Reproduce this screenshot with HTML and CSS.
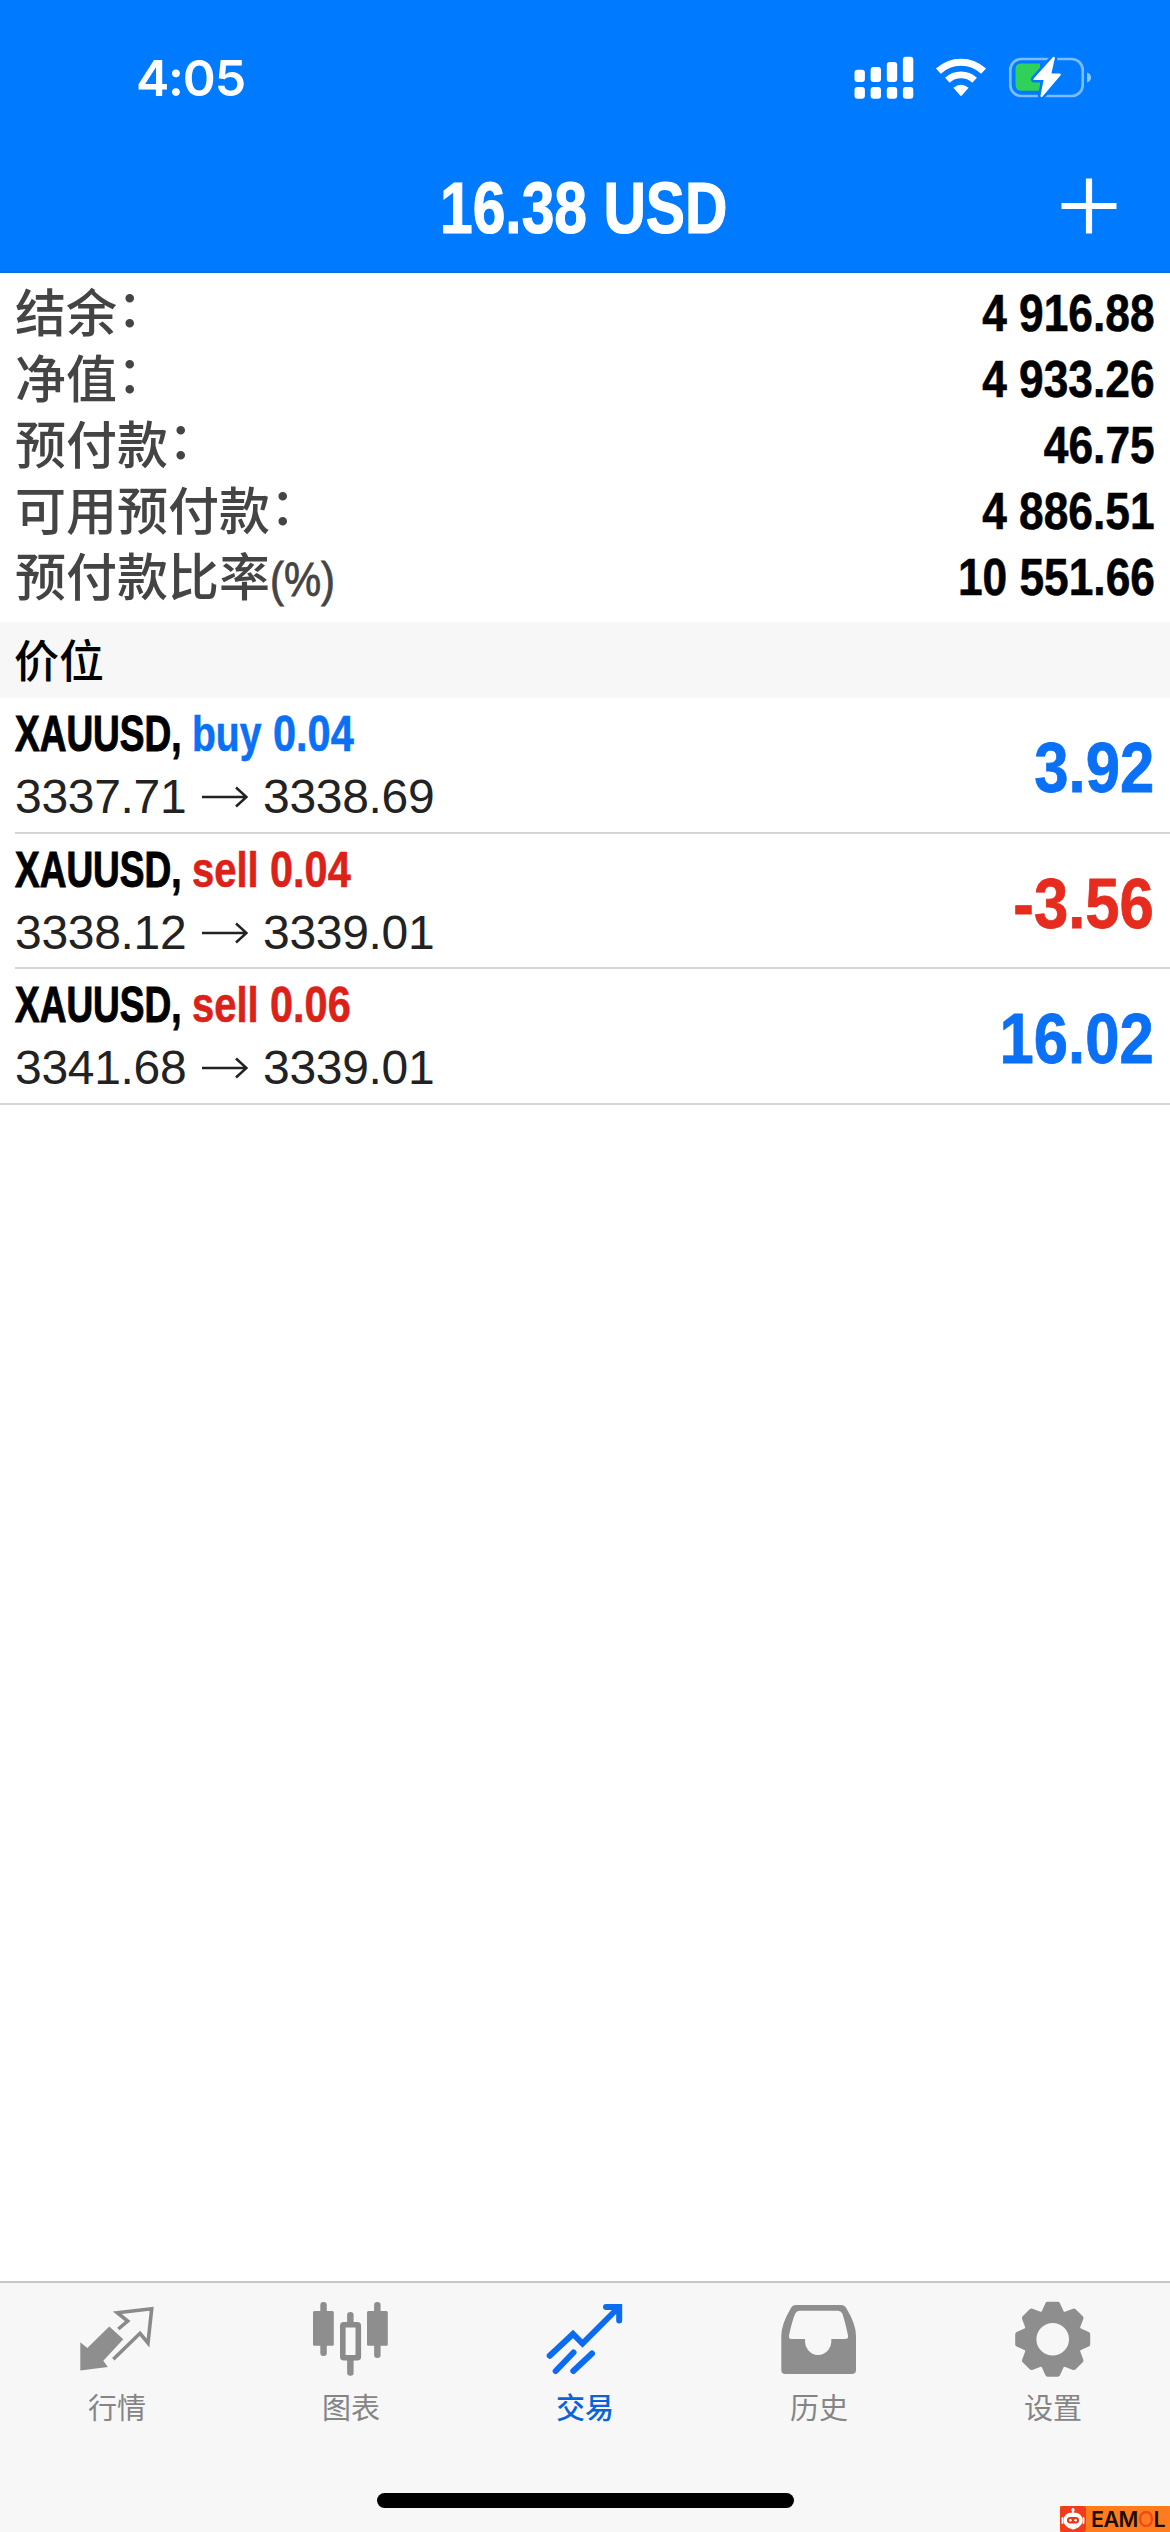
FILE: index.html
```html
<!DOCTYPE html>
<html lang="zh-CN">
<head>
<meta charset="utf-8">
<title>交易</title>
<link rel="stylesheet" href="styles.css">
</head>
<body>
<div class="app">
  <header class="header">
    <div class="status">
      <span class="clock">4:05</span>
      <div class="indicators">
        <svg width="60" height="48" viewBox="0 0 60 48" fill="#fff">
          <rect x="0.5" y="15.7" width="10.4" height="12.3" rx="3"/>
          <rect x="16.6" y="13" width="10.4" height="15" rx="3"/>
          <rect x="32.8" y="8" width="10.4" height="20" rx="3"/>
          <rect x="48.9" y="2.7" width="10.4" height="25.3" rx="3"/>
          <rect x="0.5" y="33" width="10.4" height="11.7" rx="3"/>
          <rect x="16.6" y="33" width="10.4" height="11.7" rx="3"/>
          <rect x="32.8" y="33" width="10.4" height="11.7" rx="3"/>
          <rect x="48.9" y="33" width="10.4" height="11.7" rx="3"/>
        </svg>
        <svg width="52" height="48" viewBox="0 0 52 48" fill="none" stroke="#fff">
          <path d="M3.400 17.200a33 33 0 0 1 45.200 0" stroke-width="7.200"/>
          <path d="M12.400 26.300a20 20 0 0 1 27.200 0" stroke-width="6.800"/>
          <path d="M18.400 33.800q7.600-6 15.200 0L26.800 41.600q-.8.900-1.600 0z" fill="#fff" stroke="none"/>
        </svg>
        <svg width="84" height="48" viewBox="0 0 84 48">
          <rect x="2.300" y="5" width="72.400" height="37" rx="11" fill="none" stroke="#7dbcff" stroke-width="2.700"/>
          <path d="M79 18.500q4 1 4 5t-4 5z" fill="#8cc5ff"/>
          <path d="M13.500 9.500H32v27.200H13.500q-6 0-6-6V15.500q0-6 6-6z" fill="#30d158"/>
          <path d="M44.600 3.400 25.700 24.500q-1 1.600 1 1.600h8.900L32.400 42q.5 2 2.200.5L52.600 21.200q1-1.600-1-1.600h-8.200L46.900 4q-.5-2-2.300-.6z" fill="#fff" stroke="#007aff" stroke-width="5" paint-order="stroke"/>
        </svg>
      </div>
    </div>
    <div class="navbar">
      <h1 class="title"><span>16.38 USD</span></h1>
      <svg class="add" width="56" height="56" viewBox="0 0 56 56"><path d="M28 .500v55M.500 28h55" stroke="#fff" stroke-width="6.200"/></svg>
    </div>
  </header>

  <dl class="account">
    <div class="line"><dt>结余<span class="colon">：</span></dt><dd>4 916.88</dd></div>
    <div class="line"><dt>净值<span class="colon">：</span></dt><dd>4 933.26</dd></div>
    <div class="line"><dt>预付款<span class="colon">：</span></dt><dd>46.75</dd></div>
    <div class="line"><dt>可用预付款<span class="colon">：</span></dt><dd>4 886.51</dd></div>
    <div class="line"><dt>预付款比率<span class="unit">(%)</span></dt><dd>10 551.66</dd></div>
  </dl>

  <h2 class="section">价位</h2>

  <ul class="positions">
    <li class="position">
      <div class="deal">
        <div class="order"><span class="symbol">XAUUSD,</span><span class="side buy">buy</span><span class="volume buy">0.04</span></div>
        <div class="prices"><span>3337.71</span><svg width="46" height="22" viewBox="0 0 46 22"><path d="M0 11h44M34 1.500 44.500 11 34 20.500" fill="none" stroke="#222" stroke-width="2.500"/></svg><span>3338.69</span></div>
      </div>
      <span class="profit buy">3.92</span>
    </li>
    <li class="position">
      <div class="deal">
        <div class="order"><span class="symbol">XAUUSD,</span><span class="side sell">sell</span><span class="volume sell">0.04</span></div>
        <div class="prices"><span>3338.12</span><svg width="46" height="22" viewBox="0 0 46 22"><path d="M0 11h44M34 1.500 44.500 11 34 20.500" fill="none" stroke="#222" stroke-width="2.500"/></svg><span>3339.01</span></div>
      </div>
      <span class="profit loss">-3.56</span>
    </li>
    <li class="position">
      <div class="deal">
        <div class="order"><span class="symbol">XAUUSD,</span><span class="side sell">sell</span><span class="volume sell">0.06</span></div>
        <div class="prices"><span>3341.68</span><svg width="46" height="22" viewBox="0 0 46 22"><path d="M0 11h44M34 1.500 44.500 11 34 20.500" fill="none" stroke="#222" stroke-width="2.500"/></svg><span>3339.01</span></div>
      </div>
      <span class="profit buy">16.02</span>
    </li>
  </ul>

  <footer class="footer">
    <nav class="tabs">
      <a class="tab">
        <svg width="90" height="90" viewBox="0 0 90 90">
          <path d="M8.300 46.300v28.200l27.500-3.600-4.500-6.200L51.300 43.300 37.300 30.400 15.300 52z" fill="#8e8e8e"/>
          <path d="M46.300 33l9.400-8-10.400-8.300 34.400-4L76 47l-8-9.700-26.700 26" fill="none" stroke="#8a8a8a" stroke-width="3.600"/>
        </svg>
        <span>行情</span>
      </a>
      <a class="tab">
        <svg width="90" height="90" viewBox="0 0 90 90" fill="#8e8e8e">
          <rect x="14.300" y="6" width="6.500" height="54" rx="3"/><rect x="7" y="15" width="20.800" height="34.800" rx="1.500"/>
          <rect x="41.100" y="16" width="6.500" height="14" rx="3"/><rect x="41.100" y="60" width="6.500" height="19.800" rx="3"/>
          <rect x="36.800" y="28.800" width="15.500" height="33" rx="1" fill="none" stroke="#8a8a8a" stroke-width="5.600"/>
          <rect x="68.100" y="6" width="6.500" height="56" rx="3"/><rect x="61" y="15" width="20.800" height="34.800" rx="1.500"/>
        </svg>
        <span>图表</span>
      </a>
      <a class="tab active">
        <svg width="90" height="90" viewBox="0 0 90 90" fill="none" stroke="#0a6cf0" stroke-width="6" stroke-linecap="round">
          <path d="M9.700 59.700 33 38l9.500 9.500L78.500 11.500M66 11h13.200v13.500M15.700 75l17.800-18.500M33.300 75 52 57.500"/>
        </svg>
        <span>交易</span>
      </a>
      <a class="tab">
        <svg width="90" height="90" viewBox="0 0 90 90">
          <path fill-rule="evenodd" fill="#8e8e8e" d="M22 9h45q3.500 0 5.200 3Q82 28 82 40v34q0 4-4 4H11.300q-4 0-4-4V40Q7.300 28 17 12q1.500-3 5-3zM25.500 14.800q-3 0-4.200 2.600Q18 25 15 39.500q-.5 3.500 2.500 3.500H31v3q0 4 3 8 4 5 10 5t10.300-5q3-4 3-8v-3h13.500q4 0 3.200-3.500Q71 25 68.300 17.400q-1.300-2.600-4.300-2.600z"/>
        </svg>
        <span>历史</span>
      </a>
      <a class="tab">
        <svg width="90" height="90" viewBox="0 0 90 90">
          <g transform="translate(44.700 43.300)" fill="#8e8e8e" stroke="#8e8e8e" stroke-linejoin="round">
            <circle r="23" fill="none" stroke-width="13.400"/>
            <g stroke-width="5">
              <path id="tooth" d="M-9.500-25-5-35H5L9.500-25z"/>
              <use href="#tooth" transform="rotate(45)"/><use href="#tooth" transform="rotate(90)"/><use href="#tooth" transform="rotate(135)"/><use href="#tooth" transform="rotate(180)"/><use href="#tooth" transform="rotate(225)"/><use href="#tooth" transform="rotate(270)"/><use href="#tooth" transform="rotate(315)"/>
            </g>
          </g>
        </svg>
        <span>设置</span>
      </a>
    </nav>
    <div class="home"></div>
  </footer>

  <div class="brand">
    <svg width="26" height="26" viewBox="0 0 26 26">
      <rect width="26" height="26" rx="3" fill="#f03c1c"/>
      <path d="M13 3v6M2.500 12v5M23.500 12v5" stroke="#fff" stroke-width="1.800" stroke-linecap="round"/><circle cx="13" cy="4" r="1.700" fill="#fff"/>
      <path d="M13 6.500c6.500 0 9.500 3.500 9.500 8S18 22.500 13 23.500C8 22.500 3.500 19 3.500 14.500s3-8 9.500-8z" fill="#fff"/>
      <rect x="7" y="11" width="12" height="6.500" rx="3.200" fill="#e8381c"/><circle cx="10.400" cy="14.200" r="1.300" fill="#fff"/><circle cx="15.600" cy="14.200" r="1.300" fill="#fff"/>
    </svg>
    <span class="wordmark">EAM<b>O</b>L</span>
  </div>
</div>
</body>
</html>
```
FILE: styles.css
```css
* { box-sizing: border-box; margin: 0; padding: 0; }

body {
  width: 1170px;
  height: 2532px;
  overflow: hidden;
  background: #fff;
  font-family: "Liberation Sans", "Noto Sans CJK SC", sans-serif;
  color: #000;
}

svg { display: block; flex: none; }

.app {
  position: relative;
  display: flex;
  flex-direction: column;
  width: 1170px;
  height: 2532px;
}

.header {
  height: 273px;
  background: #007aff;
  border-bottom: 2px solid #0872e4;
  color: #fff;
}

.status {
  display: flex;
  justify-content: space-between;
  align-items: flex-start;
  height: 150px;
  padding: 54px 78px 0 136px;
}

.clock {
  font: 600 50px/48px Inter, sans-serif;
  letter-spacing: -1.2px;
}

.indicators { display: flex; gap: 21px; }

.navbar {
  display: grid;
  grid-template-columns: 1fr auto 1fr;
  align-items: center;
  height: 112px;
  padding: 0 53px 0 51px;
}

.title {
  grid-column: 2;
  width: 288px;
  padding-top: 3px;
  font-size: 73px;
  line-height: 78px;
  white-space: nowrap;
  -webkit-text-stroke: 1.2px currentColor;
}

.title span {
  display: inline-block;
  transform: scaleX(0.805);
  transform-origin: left;
}

.add { justify-self: end; }

.account {
  height: 349px;
  padding: 8px 15px 0;
}

.line {
  display: flex;
  justify-content: space-between;
  height: 66px;
  line-height: 66px;
}

.line dt {
  font-size: 51px;
  font-weight: 500;
  line-height: 68px;
  color: #444;
}

.colon {
  line-height: 0;
  vertical-align: 5px;
}

.unit {
  display: inline-block;
  font-size: 48px;
  line-height: 60px;
  transform: scaleX(0.87);
  transform-origin: left;
  -webkit-text-stroke: 0.8px #444;
}

.line dd {
  font-size: 51px;
  font-weight: 700;
  transform: scaleX(0.868);
  transform-origin: right;
  -webkit-text-stroke: 0.6px currentColor;
}

.section {
  height: 76px;
  padding-left: 14px;
  background: #f7f7f7;
  font: 500 45px/74px "Noto Sans CJK SC", sans-serif;
}

.positions { flex: 1; list-style: none; }

.position {
  display: flex;
  justify-content: space-between;
  align-items: center;
  height: 135px;
  margin-left: 15px;
  padding-right: 16px;
  border-bottom: 2px solid #d4d4d4;
}

.position:first-child { height: 136px; }

.position:last-child {
  height: 136px;
  margin-left: 0;
  padding-left: 15px;
}

.order {
  display: flex;
  height: 66px;
  font-size: 50px;
  font-weight: 700;
  line-height: 66px;
  white-space: nowrap;
  -webkit-text-stroke: 0.6px currentColor;
}

.order span { transform-origin: left; }
.symbol { width: 177px; transform: scaleX(0.74); -webkit-text-stroke: 1px #000; }
.side { width: 81px; transform: scaleX(0.78); }
.side.sell { width: 78px; transform: scaleX(0.8); }
.volume { transform: scaleX(0.83); }
.order .buy { -webkit-text-stroke-color: #0a70f5; }
.order .sell { -webkit-text-stroke-color: #dc2118; }

.prices {
  display: flex;
  align-items: center;
  height: 62px;
  padding-bottom: 2px;
  font-size: 48px;
  line-height: 60px;
  color: #222;
}

.prices span { width: 187px; letter-spacing: -0.3px; }
.prices svg { margin-right: 15px; }

.profit {
  padding-top: 5px;
  font-size: 71px;
  font-weight: 700;
  transform: scaleX(0.868);
  transform-origin: right;
  -webkit-text-stroke: 0.8px currentColor;
}

.buy { color: #0a70f5; }
.sell { color: #dc2118; }
.loss { color: #e62c1f; }

.footer {
  height: 251px;
  border-top: 2px solid #c6c6c6;
  background: #f7f7f7;
}

.tabs {
  display: grid;
  grid-template-columns: repeat(5, 1fr);
  height: 210px;
  padding-top: 13px;
}

.tab {
  display: flex;
  flex-direction: column;
  align-items: center;
  color: #858585;
  font: 400 29px/40px "Noto Sans CJK SC", sans-serif;
}

.active { color: #0a64d8; font-weight: 500; }

.home {
  width: 417px;
  height: 15px;
  margin: 0 auto;
  border-radius: 8px;
  background: #000;
}

.brand {
  position: absolute;
  right: 0;
  bottom: 0;
  display: flex;
  align-items: center;
  gap: 5px;
  width: 110px;
  height: 26px;
  background: #ff7c1e;
}

.wordmark {
  font: 600 21.5px/26px Inter, sans-serif;
  letter-spacing: -0.6px;
  color: #1c0c04;
}

.wordmark b { font-weight: 500; color: #ee4a1c; }
```
